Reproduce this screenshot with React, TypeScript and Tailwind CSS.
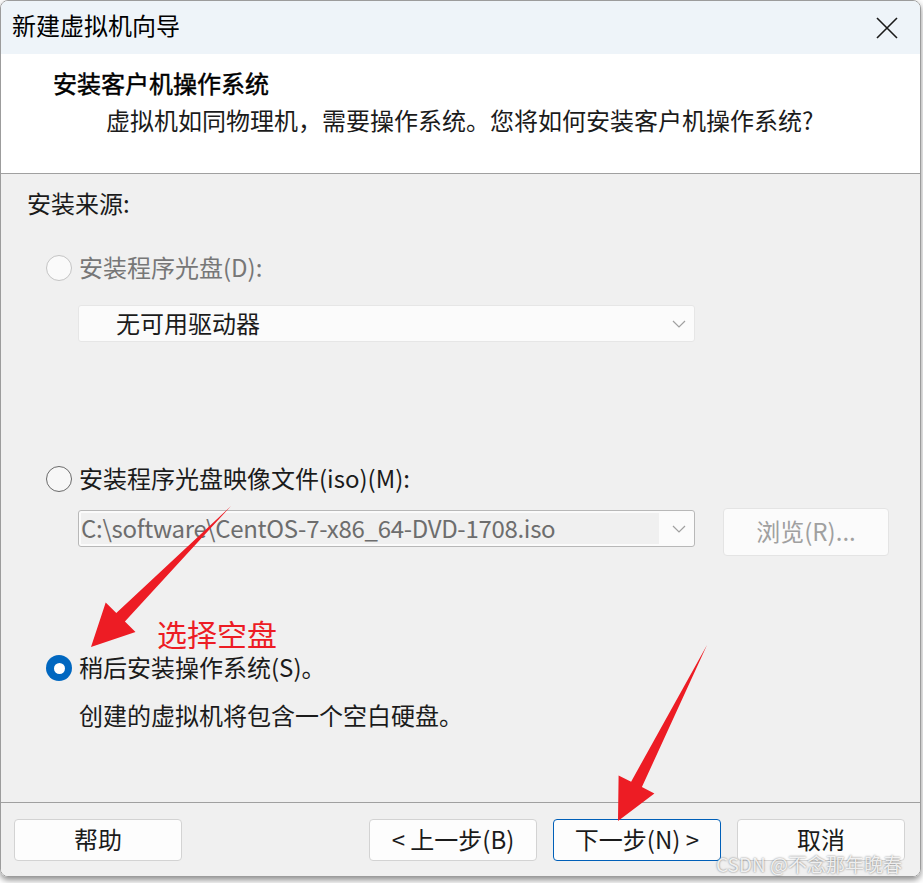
import React from 'react';

const font = { fontFamily: '"Noto Sans CJK SC", "Noto Sans", sans-serif' };

function Radio({ checked = false, disabled = false }: { checked?: boolean; disabled?: boolean }) {
  if (checked) {
    return (
      <div className="w-[26px] h-[26px] rounded-full bg-[#0067c0] flex items-center justify-center shrink-0">
        <div className="w-[11px] h-[11px] rounded-full bg-white" />
      </div>
    );
  }
  return (
    <div
      className={`w-[26px] h-[26px] rounded-full shrink-0 border-[1.5px] ${
        disabled ? 'border-[#c4c4c4] bg-[#fafafa]' : 'border-[#6a6a6a] bg-[#f7f7f7]'
      }`}
    />
  );
}

function Chevron() {
  return (
    <svg width="14" height="8" viewBox="0 0 14 8" className="shrink-0">
      <path d="M1 1 L7 7 L13 1" fill="none" stroke="#a0a0a0" strokeWidth="1.2" />
    </svg>
  );
}

function Button({ children, primary = false }: { children: React.ReactNode; primary?: boolean }) {
  return (
    <div
      className={`w-[168px] h-[42px] rounded-[4px] bg-[#fdfdfd] flex items-center justify-center pb-[3px] text-[24px] leading-none text-[#1b1b1b] border ${
        primary ? 'border-[#005fb8]' : 'border-[#d3d3d3]'
      }`}
    >
      {children}
    </div>
  );
}

export default function App() {
  return (
    <div className="relative w-[923px] h-[883px] bg-white overflow-hidden" style={font}>
      <div className="w-[921px] h-[877px] rounded-[8px] border border-[#9c9c9c] overflow-hidden flex flex-col shadow-[0_3px_6px_rgba(0,0,0,0.45)]">
        {/* Title bar */}
        <div className="h-[53px] bg-[#eef4f9] flex items-center justify-between pl-[11px] pr-[22px] pb-[6px] shrink-0">
          <span className="text-[24px] leading-none text-black">新建虚拟机向导</span>
          <svg width="22" height="22" viewBox="0 0 22 22" className="mt-[6px]">
            <path d="M1 1 L21 21 M21 1 L1 21" stroke="#1a1a1a" strokeWidth="1.6" />
          </svg>
        </div>

        {/* Header */}
        <div className="h-[120px] bg-white border-b border-[#a0a0a0] shrink-0 flex flex-col">
          <div className="pl-[52px] mt-[14px] h-[30px] flex items-center text-[24px] leading-none text-black [-webkit-text-stroke:0.45px_black]">
            安装客户机操作系统
          </div>
          <div className="pl-[105px] mt-[7px] h-[30px] flex items-center text-[24px] leading-none text-[#1b1b1b]">
            虚拟机如同物理机，需要操作系统。您将如何安装客户机操作系统?
          </div>
        </div>

        {/* Body */}
        <div className="flex-1 bg-[#f0f0f0] border-b border-[#a0a0a0] flex flex-col pl-[26px]">
          <div className="mt-[13px] h-[32px] flex items-center text-[24px] leading-none text-[#1b1b1b]">安装来源:</div>

          <div className="mt-[33px] h-[32px] flex items-center pl-[19px] gap-[7px]">
            <Radio disabled />
            <span className="text-[24px] leading-none text-[#777777] pb-[2px]">安装程序光盘(D):</span>
          </div>

          <div className="mt-[21px] ml-[51px] w-[617px] h-[37px] bg-[#fbfbfb] border border-[#e6e6e6] rounded-[3px] flex items-center justify-between pl-[37px] pr-[8px]">
            <span className="text-[24px] leading-none text-[#1b1b1b] pb-[2px]">无可用驱动器</span>
            <Chevron />
          </div>

          <div className="mt-[121px] h-[32px] flex items-center pl-[19px] gap-[7px]">
            <Radio />
            <span className="text-[24px] leading-none text-[#1b1b1b] pb-[2px]">安装程序光盘映像文件(iso)(M):</span>
          </div>

          <div className="mt-[13px] ml-[51px] flex items-start gap-[28px]">
            <div className="mt-[2px] w-[617px] h-[37px] bg-[#fbfbfb] border border-[#b8b8b8] rounded-[3px] flex items-center p-[2px] pr-[8px]">
              <div className="w-[578px] h-full bg-[#f0f0f0] flex items-center pb-[2px]">
                <span className="text-[24px] leading-none text-[#6d6d6d] tracking-[-0.3px]">
                  C:\software\CentOS-7-x86_64-DVD-1708.iso
                </span>
              </div>
              <div className="flex-1 flex justify-end">
                <Chevron />
              </div>
            </div>
            <div className="w-[166px] h-[48px] bg-[#fbfbfb] border border-[#e4e4e4] rounded-[4px] flex items-center justify-center pb-[3px] text-[24px] leading-none text-[#a0a0a0]">
              浏览(R)...
            </div>
          </div>

          <div className="mt-[96px] h-[32px] flex items-center pl-[19px] gap-[7px]">
            <Radio checked />
            <span className="text-[24px] leading-none text-[#1b1b1b] pb-[2px]">稍后安装操作系统(S)。</span>
          </div>

          <div className="mt-[15px] h-[32px] flex items-center pl-[52px] text-[24px] leading-none text-[#1b1b1b]">
            创建的虚拟机将包含一个空白硬盘。
          </div>
        </div>

        {/* Footer */}
        <div className="h-[73px] bg-[#f0f0f0] shrink-0 flex items-start pt-[16px] pl-[13px] pr-[15px]">
          <Button>帮助</Button>
          <div className="flex-1" />
          <div className="flex gap-[16px]">
            <Button>&lt; 上一步(B)</Button>
            <Button primary>下一步(N) &gt;</Button>
            <Button>取消</Button>
          </div>
        </div>
      </div>

      {/* Annotations */}
      <svg className="absolute inset-0 pointer-events-none" width="923" height="883" viewBox="0 0 923 883">
        <polygon
          points="231,506 124.9,621.4 135.5,632 91,647 105.7,602.4 116.3,613"
          fill="#ed1c24"
        />
        <polygon
          points="707,645 641.9,787.1 654.4,793.4 618,821 618.6,775.4 631.1,781.7"
          fill="#ed1c24"
        />
      </svg>
      <div className="absolute left-[157px] top-[618px] h-[30px] text-[30px] leading-[30px] text-[#ed1c24]">选择空盘</div>
      <div className="absolute left-[716px] top-[855px] h-[18px] text-[19px] leading-[18px] text-[rgba(255,255,255,0.85)] [text-shadow:0_0_2px_rgba(0,0,0,0.55)]">
        CSDN @不念那年晚春
      </div>
    </div>
  );
}
